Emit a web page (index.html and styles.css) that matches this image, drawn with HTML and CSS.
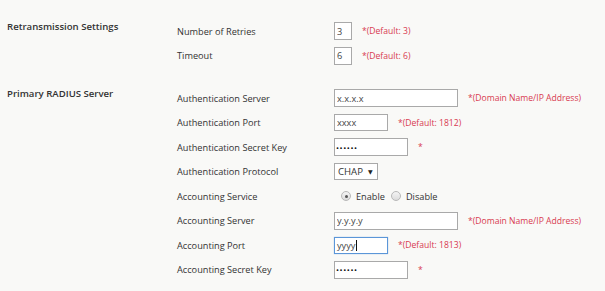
FILE: index.html
```html
<!DOCTYPE html>
<html>
<head>
<meta charset="utf-8">
<link rel="stylesheet" href="styles.css">
</head>
<body>
<div class="page">
  <section class="section">
    <h3 class="heading">Retransmission Settings</h3>
    <div class="rows">
      <div class="row">
        <span class="label">Number of Retries</span>
        <div class="field"><input class="inp w-xs" type="text" value="3"><span class="note">*(Default: 3)</span></div>
      </div>
      <div class="row">
        <span class="label">Timeout</span>
        <div class="field"><input class="inp w-xs" type="text" value="6"><span class="note">*(Default: 6)</span></div>
      </div>
    </div>
  </section>
  <section class="section">
    <h3 class="heading">Primary RADIUS Server</h3>
    <div class="rows">
      <div class="row">
        <span class="label">Authentication Server</span>
        <div class="field"><input class="inp w-lg" type="text" value="x.x.x.x"><span class="note">*(Domain Name/IP Address)</span></div>
      </div>
      <div class="row">
        <span class="label">Authentication Port</span>
        <div class="field"><input class="inp w-sm" type="text" value="xxxx"><span class="note">*(Default: 1812)</span></div>
      </div>
      <div class="row">
        <span class="label">Authentication Secret Key</span>
        <div class="field"><span class="inp w-md pw">&bull;&bull;&bull;&bull;&bull;&bull;</span><span class="note">*</span></div>
      </div>
      <div class="row">
        <span class="label">Authentication Protocol</span>
        <div class="field"><div class="select"><span>CHAP</span><span class="caret">&#9660;</span></div></div>
      </div>
      <div class="row">
        <span class="label">Accounting Service</span>
        <div class="field radios">
          <label class="radio"><span class="dot on"></span>Enable</label>
          <label class="radio"><span class="dot"></span>Disable</label>
        </div>
      </div>
      <div class="row">
        <span class="label">Accounting Server</span>
        <div class="field"><input class="inp w-lg" type="text" value="y.y.y.y"><span class="note">*(Domain Name/IP Address)</span></div>
      </div>
      <div class="row">
        <span class="label">Accounting Port</span>
        <div class="field"><span class="inp w-sm focus">yyyy<span class="cursor"></span></span><span class="note">*(Default: 1813)</span></div>
      </div>
      <div class="row">
        <span class="label">Accounting Secret Key</span>
        <div class="field"><span class="inp w-md pw">&bull;&bull;&bull;&bull;&bull;&bull;</span><span class="note">*</span></div>
      </div>
    </div>
  </section>
</div>
</body>
</html>
```

FILE: styles.css
```css
html, body {
  margin: 0;
  padding: 0;
  background: #f9f9f7;
}
body {
  font-family: "Open Sans", "DejaVu Sans", sans-serif;
  font-size: 9.2px;
  color: #333;
}
.page {
  padding: 18.75px 0 0 7px;
}
.section {
  display: flex;
  align-items: flex-start;
  margin-bottom: 18px;
}
.heading {
  margin: 0;
  width: 170px;
  flex: none;
  font-size: 9.6px;
  font-weight: 600;
  line-height: 16px;
  color: #333;
}
.rows {
  display: flex;
  flex-direction: column;
}
.row {
  display: flex;
  align-items: center;
  height: 24.55px;
}
.label {
  width: 157px;
  flex: none;
}
.field {
  display: flex;
  align-items: center;
  gap: 10px;
}
.inp {
  box-sizing: border-box;
  height: 17.5px;
  margin: 0;
  padding: 0 2px;
  border: 1px solid #a9a9a9;
  background: #fff;
  font-family: "Open Sans", "DejaVu Sans", sans-serif;
  font-size: 9.2px;
  color: #444;
  outline: none;
  display: flex;
  align-items: center;
}
.w-xs { width: 18px; height: 18px; }
.w-sm { width: 54px; }
.w-md { width: 74px; }
.w-lg { width: 124px; }
.pw {
  font-size: 8px;
  letter-spacing: 0.6px;
  color: #111;
  padding-left: 1px;
}
.focus {
  border-color: #5b96d8;
  box-shadow: 0 0 1px rgba(91, 150, 216, 0.6);
}
.cursor {
  display: inline-block;
  width: 1px;
  height: 11px;
  background: #111;
  margin-left: 0.5px;
}
.note {
  color: #d83a50;
  font-size: 8.6px;
}
.select {
  box-sizing: border-box;
  width: 44px;
  height: 17px;
  border: 1px solid #a9a9a9;
  background: #fff;
  display: flex;
  align-items: center;
  padding: 0 3px 0 3px;
  gap: 5px;
  font-size: 9.6px;
}
.caret {
  font-size: 6px;
  color: #222;
}
.radios {
  gap: 0;
  padding-left: 7px;
}
.radio {
  display: flex;
  align-items: center;
  margin-right: 6px;
}
.dot {
  box-sizing: border-box;
  width: 10px;
  height: 10px;
  border-radius: 50%;
  border: 1px solid #b8b8b8;
  background: linear-gradient(#f4f4f4, #dcdcdc);
  margin-right: 5px;
  position: relative;
}
.dot.on::after {
  content: "";
  position: absolute;
  left: 2.5px;
  top: 2.5px;
  width: 3px;
  height: 3px;
  border-radius: 50%;
  background: #555;
}
```
